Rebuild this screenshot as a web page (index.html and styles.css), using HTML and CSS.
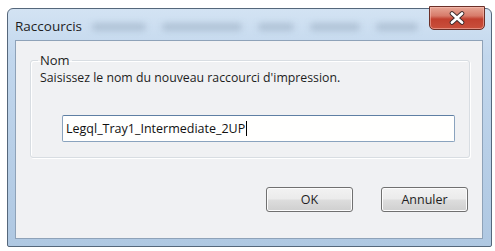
FILE: index.html
```html
<!DOCTYPE html>
<html lang="fr">
<head>
    <meta charset="UTF-8">
    <title>Raccourcis</title>
    <link rel="stylesheet" href="styles.css">
</head>
<body>
    <div class="window">
        <div class="titlebar">
            <span class="title">Raccourcis</span>
            <div class="ghosts">
                <span class="ghost g1"></span>
                <span class="ghost g2"></span>
                <span class="ghost g3"></span>
                <span class="ghost g4"></span>
                <span class="ghost g5"></span>
            </div>
            <button class="close-btn" aria-label="Fermer">
                <svg width="18" height="14" viewBox="0 0 18 14">
                    <path d="M4 2.5 L14 11.5 M14 2.5 L4 11.5" stroke="#3b2a2a" stroke-width="4.6" stroke-linecap="round"/>
                    <path d="M4 2.5 L14 11.5 M14 2.5 L4 11.5" stroke="#ffffff" stroke-width="2.8" stroke-linecap="round"/>
                </svg>
            </button>
        </div>

        <div class="client">
            <fieldset class="group">
                <legend>Nom</legend>
                <p class="prompt">Saisissez le nom du nouveau raccourci d'impression.</p>
                <div class="field">Legql_Tray1_Intermediate_2UP<span class="caret"></span></div>
            </fieldset>

            <div class="actions">
                <button class="btn">OK</button>
                <button class="btn">Annuler</button>
            </div>
        </div>
    </div>
</body>
</html>
```

FILE: styles.css
```css
* {
    margin: 0;
    padding: 0;
    box-sizing: border-box;
    font-family: 'Open Sans', 'Noto Sans', sans-serif;
}

body {
    background: #ffffff;
    width: 495px;
    height: 251px;
    overflow: hidden;
}

.window {
    position: relative;
    margin: 8px 3px 0 7px;
    width: 485px;
    height: 239px;
    display: flex;
    flex-direction: column;
    border: 1px solid #55677b;
    border-radius: 6px 6px 2px 2px;
    background: linear-gradient(180deg, #d3e3f3 0%, #c2d7ed 20%, #b8cfe7 60%, #afc8e2 100%);
}

.titlebar {
    height: 31px;
    display: flex;
    align-items: center;
    padding-left: 7px;
}

.title {
    font-size: 13.5px;
    color: #1e1e1e;
    margin-top: 2px;
}

.ghosts {
    display: flex;
    gap: 16px;
    margin-left: 10px;
    margin-top: 5px;
}

.ghost {
    height: 8px;
    background: #a6b9cd;
    border-radius: 4px;
    filter: blur(3px);
    opacity: 0.75;
}

.g1 { width: 54px; }
.g2 { width: 80px; }
.g3 { width: 36px; }
.g4 { width: 50px; }
.g5 { width: 42px; }

.close-btn {
    position: absolute;
    top: -3px;
    right: 6px;
    width: 56px;
    height: 24px;
    border: 1px solid #6b3028;
    border-radius: 0 0 5px 5px;
    background: linear-gradient(180deg, #e7a796 0%, #d77b6a 40%, #c2402f 55%, #c9503c 100%);
    box-shadow: inset 0 0 0 1px rgba(255, 200, 190, 0.5);
    display: flex;
    align-items: center;
    justify-content: center;
}

.client {
    flex: 1;
    margin: 0 8px 7px 7px;
    background: #f0f1f3;
    border: 1px solid #8ea2b8;
    padding: 11px 12px 0 14px;
    display: flex;
    flex-direction: column;
}

.group {
    border: 1px solid #d8dde2;
    border-radius: 3px;
    box-shadow: inset 1px 1px 0 #ffffff, 1px 1px 0 #ffffff;
    padding: 0 14px 15px 7px;
}

.group legend {
    font-size: 13px;
    line-height: 16px;
    padding: 0 2px;
    color: #1e1e1e;
}

.prompt {
    font-size: 12.3px;
    line-height: 18px;
    padding-left: 2px;
    margin-top: 1px;
    color: #1e1e1e;
}

.field {
    margin: 28px 0 0 24px;
    width: 393px;
    height: 27px;
    border: 1px solid #8aa3be;
    border-top-color: #5e7fa3;
    border-radius: 2px;
    background: #fffffe;
    font-size: 12.5px;
    line-height: 25px;
    padding-left: 3px;
    color: #111;
    display: flex;
    align-items: center;
}

.caret {
    display: inline-block;
    width: 1px;
    height: 15px;
    background: #000;
    margin-left: 1px;
}

.actions {
    display: flex;
    justify-content: flex-end;
    gap: 28px;
    margin: 29px 2px 0 0;
}

.btn {
    width: 87px;
    height: 25px;
    border: 1px solid #707070;
    border-radius: 3px;
    background: linear-gradient(180deg, #f2f2f2 0%, #ebebeb 48%, #dddddd 52%, #cfcfcf 100%);
    box-shadow: inset 0 0 0 1px #fcfcfc;
    font-size: 12.5px;
    color: #1e1e1e;
}
```
